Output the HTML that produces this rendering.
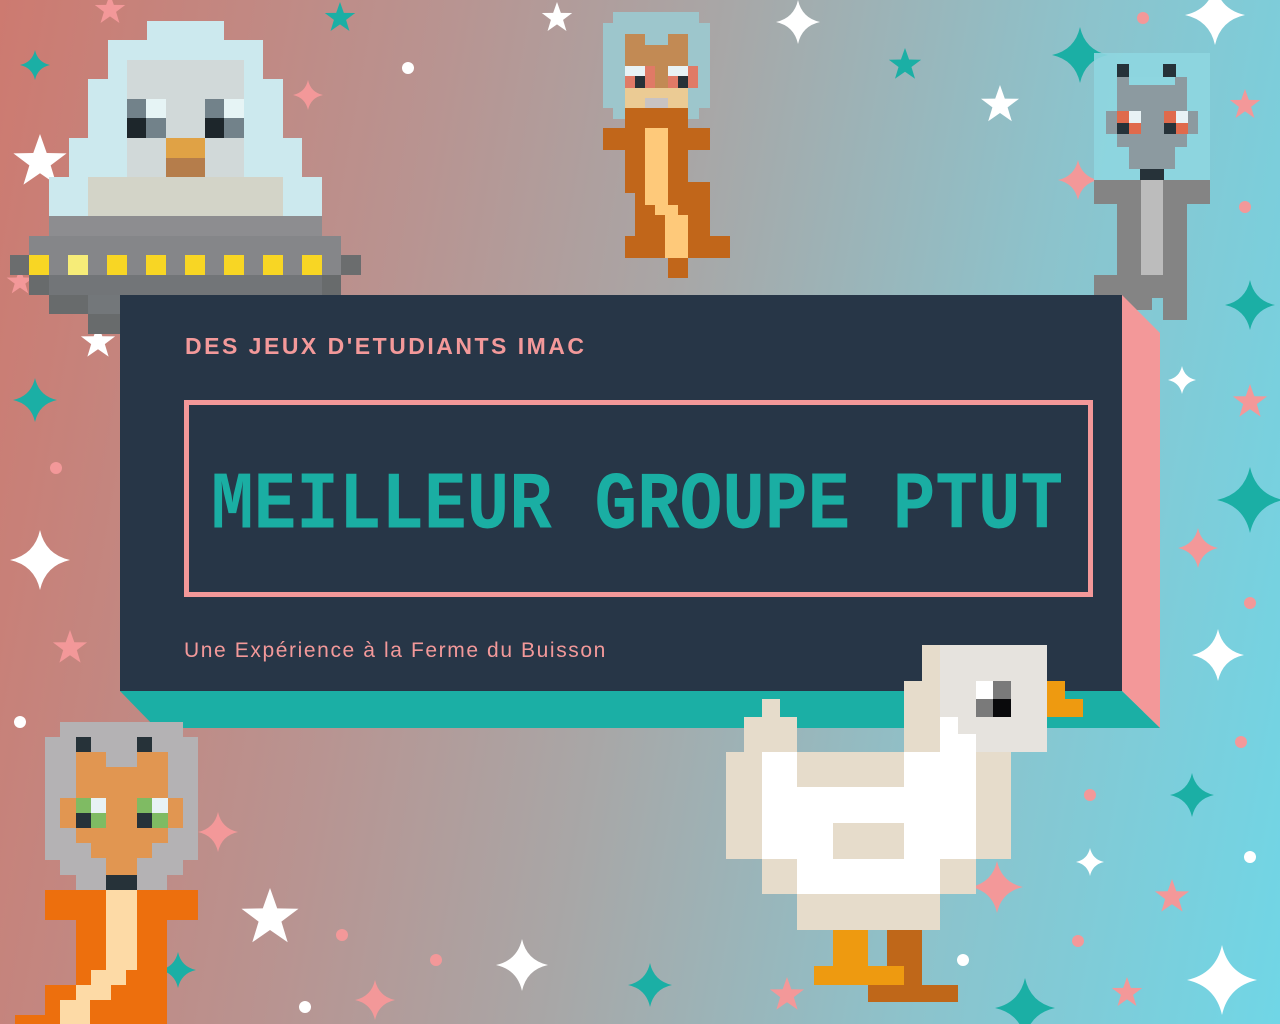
<!DOCTYPE html>
<html><head><meta charset="utf-8"><style>
html,body{margin:0;padding:0}
body{width:1280px;height:1024px;overflow:hidden;position:relative;background:linear-gradient(100deg,#cd7a70 0%,#b99390 30%,#a8a7a7 50%,#8cc3cc 75%,#70d6e6 100%);font-family:"Liberation Sans",sans-serif}
svg{position:absolute;left:0;top:0}
.t{position:absolute;color:#f3999a}
</style></head><body>
<svg width="1280" height="1024" viewBox="0 0 1280 1024">
<defs>
<path id="sp" d="M0,-1 Q0.18,-0.18 1,0 Q0.18,0.18 0,1 Q-0.18,0.18 -1,0 Q-0.18,-0.18 0,-1Z"/>
<path id="st" d="M0,-1 L0.24,-0.32 0.95,-0.31 0.38,0.12 0.59,0.81 0,0.4 -0.59,0.81 -0.38,0.12 -0.95,-0.31 -0.24,-0.32Z"/>
</defs>
<g>
<use href="#sp" transform="translate(35,65) scale(15)" fill="#1bafa5"/>
<use href="#sp" transform="translate(308,95) scale(15)" fill="#f39899"/>
<use href="#sp" transform="translate(798,22) scale(22)" fill="#fff"/>
<use href="#sp" transform="translate(1080,55) scale(28)" fill="#1bafa5"/>
<use href="#sp" transform="translate(1215,15) scale(30)" fill="#fff"/>
<use href="#sp" transform="translate(1182,380) scale(14)" fill="#fff"/>
<use href="#sp" transform="translate(1250,305) scale(25)" fill="#1bafa5"/>
<use href="#sp" transform="translate(1250,500) scale(33)" fill="#1bafa5"/>
<use href="#sp" transform="translate(1198,548) scale(20)" fill="#f39899"/>
<use href="#sp" transform="translate(40,560) scale(30)" fill="#fff"/>
<use href="#sp" transform="translate(35,400) scale(22)" fill="#1bafa5"/>
<use href="#sp" transform="translate(1218,655) scale(26)" fill="#fff"/>
<use href="#sp" transform="translate(1078,180) scale(20)" fill="#f39899"/>
<use href="#sp" transform="translate(1192,795) scale(22)" fill="#1bafa5"/>
<use href="#sp" transform="translate(1090,862) scale(14)" fill="#fff"/>
<use href="#sp" transform="translate(997,887) scale(26)" fill="#f39899"/>
<use href="#sp" transform="translate(1222,980) scale(35)" fill="#fff"/>
<use href="#sp" transform="translate(1025,1008) scale(30)" fill="#1bafa5"/>
<use href="#sp" transform="translate(650,985) scale(22)" fill="#1bafa5"/>
<use href="#sp" transform="translate(522,965) scale(26)" fill="#fff"/>
<use href="#sp" transform="translate(218,832) scale(20)" fill="#f39899"/>
<use href="#sp" transform="translate(178,970) scale(18)" fill="#1bafa5"/>
<use href="#sp" transform="translate(375,1000) scale(20)" fill="#f39899"/>
<use href="#st" transform="translate(40,162) scale(28)" fill="#fff"/>
<use href="#st" transform="translate(98,342) scale(18)" fill="#fff"/>
<use href="#st" transform="translate(340,18) scale(16)" fill="#1bafa5"/>
<use href="#st" transform="translate(557,18) scale(16)" fill="#fff"/>
<use href="#st" transform="translate(905,65) scale(17)" fill="#1bafa5"/>
<use href="#st" transform="translate(1000,105) scale(20)" fill="#fff"/>
<use href="#st" transform="translate(1245,105) scale(16)" fill="#f39899"/>
<use href="#st" transform="translate(1250,402) scale(18)" fill="#f39899"/>
<use href="#st" transform="translate(70,648) scale(18)" fill="#f39899"/>
<use href="#st" transform="translate(270,918) scale(30)" fill="#fff"/>
<use href="#st" transform="translate(787,995) scale(18)" fill="#f39899"/>
<use href="#st" transform="translate(1172,897) scale(18)" fill="#f39899"/>
<use href="#st" transform="translate(1127,993) scale(16)" fill="#f39899"/>
<use href="#st" transform="translate(110,10) scale(16)" fill="#f39899"/>
<use href="#st" transform="translate(20,282) scale(14)" fill="#f39899"/>
<g fill="#fff"><circle cx="408" cy="68" r="6"/><circle cx="20" cy="722" r="6"/><circle cx="1250" cy="857" r="6"/><circle cx="963" cy="960" r="6"/><circle cx="305" cy="1007" r="6"/></g>
<g fill="#f39899"><circle cx="1143" cy="18" r="6"/><circle cx="1245" cy="207" r="6"/><circle cx="56" cy="468" r="6"/><circle cx="1250" cy="603" r="6"/><circle cx="1241" cy="742" r="6"/><circle cx="1090" cy="795" r="6"/><circle cx="1078" cy="941" r="6"/><circle cx="342" cy="935" r="6"/><circle cx="436" cy="960" r="6"/></g>
</g>

<!-- UFO -->
<g>
<rect x="147" y="21" width="77" height="20" fill="#cce9ee"/>
<rect x="108" y="40" width="155" height="40" fill="#cce9ee"/>
<rect x="88" y="79" width="195" height="60" fill="#cce9ee"/>
<rect x="69" y="138" width="233" height="40" fill="#cce9ee"/>
<rect x="49" y="177" width="273" height="40" fill="#cce9ee"/>
<rect x="127" y="60" width="117" height="117" fill="#d1d9d9"/>
<rect x="127" y="99" width="20" height="20" fill="#72828a"/><rect x="146" y="99" width="20" height="20" fill="#e6f4f5"/>
<rect x="127" y="118" width="20" height="20" fill="#1d262b"/><rect x="146" y="118" width="20" height="20" fill="#72828a"/>
<rect x="205" y="99" width="20" height="20" fill="#72828a"/><rect x="224" y="99" width="20" height="20" fill="#e6f4f5"/>
<rect x="205" y="118" width="20" height="20" fill="#1d262b"/><rect x="224" y="118" width="20" height="20" fill="#72828a"/>
<rect x="166" y="138" width="39" height="20" fill="#e0a245"/><rect x="166" y="158" width="39" height="19" fill="#b57d4b"/>
<rect x="88" y="177" width="195" height="39" fill="#d3d4c8"/>
<rect x="49" y="216" width="273" height="20" fill="#8d8d90"/>
<rect x="29" y="236" width="312" height="20" fill="#858689"/>
<rect x="10" y="255" width="19" height="20" fill="#6b6d6e"/><rect x="29" y="255" width="312" height="20" fill="#858689"/><rect x="341" y="255" width="20" height="20" fill="#6b6d6e"/>
<g fill="#f8d624"><rect x="29" y="255" width="20" height="20"/><rect x="107" y="255" width="20" height="20"/><rect x="146" y="255" width="20" height="20"/><rect x="185" y="255" width="20" height="20"/><rect x="224" y="255" width="20" height="20"/><rect x="263" y="255" width="20" height="20"/><rect x="302" y="255" width="20" height="20"/></g>
<rect x="68" y="255" width="20" height="20" fill="#f6ec78"/>
<rect x="29" y="275" width="312" height="20" fill="#727578"/><rect x="29" y="275" width="20" height="20" fill="#686b6c"/><rect x="322" y="275" width="19" height="20" fill="#686b6c"/>
<rect x="49" y="295" width="40" height="19" fill="#686b6c"/><rect x="88" y="295" width="40" height="19" fill="#73777a"/>
<rect x="88" y="314" width="40" height="20" fill="#686b6c"/>
</g>

<!-- squirrel -->
<g>
<rect x="613" y="12" width="86" height="12" fill="#9dc6cc"/>
<rect x="603" y="23" width="107" height="85" fill="#9dc6cc"/>
<rect x="613" y="107" width="86" height="12" fill="#9dc6cc"/>
<rect x="625" y="34" width="63" height="54" fill="#c28a54"/><rect x="645" y="34" width="23" height="11" fill="#9dc6cc"/>
<rect x="625" y="66" width="20" height="10" fill="#e8f2f5"/><rect x="645" y="66" width="10" height="22" fill="#e07a66"/><rect x="625" y="76" width="10" height="12" fill="#e07a66"/><rect x="635" y="76" width="10" height="12" fill="#273238"/>
<rect x="668" y="66" width="20" height="10" fill="#e8f2f5"/><rect x="688" y="66" width="10" height="22" fill="#e07a66"/><rect x="668" y="76" width="10" height="12" fill="#e07a66"/><rect x="678" y="76" width="10" height="12" fill="#273238"/>
<rect x="625" y="88" width="63" height="20" fill="#ebcb94"/><rect x="645" y="98" width="23" height="10" fill="#c8c3c3"/>
<rect x="625" y="108" width="63" height="85" fill="#c1661a"/><rect x="603" y="128" width="107" height="22" fill="#c1661a"/>
<rect x="635" y="193" width="63" height="43" fill="#c1661a"/><rect x="688" y="182" width="22" height="54" fill="#c1661a"/>
<rect x="625" y="236" width="105" height="22" fill="#c1661a"/><rect x="668" y="258" width="20" height="20" fill="#c1661a"/>
<rect x="645" y="128" width="23" height="77" fill="#fec97a"/><rect x="655" y="205" width="23" height="10" fill="#fec97a"/><rect x="665" y="215" width="23" height="43" fill="#fec97a"/>
</g>

<!-- alien -->
<g>
<rect x="1094" y="53" width="116" height="127" fill="#8ed6e0" opacity="0.9"/>
<rect x="1117" y="64" width="12" height="13" fill="#263239"/><rect x="1163" y="64" width="13" height="13" fill="#263239"/>
<rect x="1117" y="77" width="70" height="70" fill="#8c9aa0"/><rect x="1106" y="111" width="92" height="23" fill="#8c9aa0"/>
<rect x="1129" y="77" width="46" height="8" fill="#8ed6e0"/>
<rect x="1117" y="111" width="12" height="12" fill="#e06a4c"/><rect x="1129" y="111" width="12" height="12" fill="#e8f2f5"/><rect x="1117" y="123" width="12" height="11" fill="#263239"/><rect x="1129" y="123" width="12" height="11" fill="#e06a4c"/>
<rect x="1164" y="111" width="12" height="12" fill="#e06a4c"/><rect x="1176" y="111" width="12" height="12" fill="#e8f2f5"/><rect x="1164" y="123" width="12" height="11" fill="#263239"/><rect x="1176" y="123" width="12" height="11" fill="#e06a4c"/>
<rect x="1129" y="147" width="46" height="22" fill="#8c9aa0"/>
<rect x="1140" y="169" width="24" height="11" fill="#263239"/>
<rect x="1094" y="180" width="116" height="24" fill="#848484"/><rect x="1117" y="204" width="70" height="71" fill="#848484"/>
<rect x="1141" y="180" width="22" height="95" fill="#bcbcbc"/>
<rect x="1094" y="275" width="93" height="23" fill="#848484"/><rect x="1117" y="298" width="35" height="12" fill="#848484"/><rect x="1163" y="298" width="24" height="22" fill="#848484"/>
</g>

<!-- panel -->
<polygon points="1122,295 1160,333 1160,728 1122,691" fill="#f39899"/>
<polygon points="120,691 1122,691 1160,728 156,728" fill="#1bafa5"/>
<rect x="120" y="295" width="1002" height="396" fill="#273647"/>
<rect x="186.5" y="402.5" width="904" height="192" fill="none" stroke="#f39899" stroke-width="5"/>

<!-- cat -->
<g>
<rect x="60" y="722" width="123" height="15" fill="#b4b2b4"/>
<rect x="45" y="737" width="153" height="123" fill="#b4b2b4"/>
<rect x="60" y="860" width="123" height="15" fill="#b4b2b4"/>
<rect x="76" y="875" width="91" height="15" fill="#b4b2b4"/>
<rect x="76" y="737" width="15" height="15" fill="#263239"/><rect x="137" y="737" width="15" height="15" fill="#263239"/>
<rect x="76" y="752" width="30" height="91" fill="#e19651"/><rect x="106" y="767" width="31" height="76" fill="#e19651"/><rect x="137" y="752" width="31" height="91" fill="#e19651"/>
<rect x="60" y="798" width="123" height="30" fill="#e19651"/>
<rect x="91" y="843" width="61" height="15" fill="#e19651"/><rect x="106" y="858" width="31" height="17" fill="#e19651"/>
<rect x="76" y="798" width="15" height="15" fill="#7fbb63"/><rect x="91" y="798" width="15" height="15" fill="#e8f2f5"/><rect x="76" y="813" width="15" height="15" fill="#263239"/><rect x="91" y="813" width="15" height="15" fill="#7fbb63"/>
<rect x="137" y="798" width="15" height="15" fill="#7fbb63"/><rect x="152" y="798" width="16" height="15" fill="#e8f2f5"/><rect x="137" y="813" width="15" height="15" fill="#263239"/><rect x="152" y="813" width="16" height="15" fill="#7fbb63"/>
<rect x="106" y="875" width="31" height="15" fill="#263239"/>
<rect x="45" y="890" width="153" height="30" fill="#ed6f0d"/><rect x="76" y="920" width="91" height="65" fill="#ed6f0d"/>
<rect x="45" y="985" width="122" height="39" fill="#ed6f0d"/><rect x="15" y="1015" width="40" height="9" fill="#ed6f0d"/>
<rect x="106" y="890" width="31" height="80" fill="#fddaa6"/><rect x="91" y="970" width="35" height="15" fill="#fddaa6"/><rect x="76" y="985" width="35" height="15" fill="#fddaa6"/><rect x="60" y="1000" width="30" height="24" fill="#fddaa6"/>
</g>

<!-- duck -->
<g>
<rect x="922" y="645" width="18" height="36" fill="#e6dccb"/><rect x="904" y="681" width="36" height="71" fill="#e6dccb"/>
<rect x="940" y="645" width="107" height="107" fill="#e6e3de"/>
<rect x="976" y="681" width="17" height="18" fill="#fff"/><rect x="993" y="681" width="18" height="18" fill="#7a7a7a"/><rect x="976" y="699" width="17" height="18" fill="#7a7a7a"/><rect x="993" y="699" width="18" height="18" fill="#0a0a0c"/>
<rect x="1047" y="681" width="18" height="36" fill="#ee9a10"/><rect x="1065" y="699" width="18" height="18" fill="#ee9a10"/>
<rect x="940" y="717" width="18" height="35" fill="#fff"/><rect x="940" y="734" width="36" height="18" fill="#fff"/>
<rect x="762" y="699" width="18" height="18" fill="#e6dccb"/><rect x="744" y="717" width="53" height="35" fill="#e6dccb"/>
<rect x="726" y="752" width="285" height="107" fill="#e6dccb"/>
<rect x="762" y="752" width="214" height="107" fill="#fff"/>
<rect x="797" y="752" width="107" height="35" fill="#e6dccb"/><rect x="833" y="823" width="71" height="36" fill="#e6dccb"/>
<rect x="762" y="859" width="214" height="35" fill="#e6dccb"/><rect x="797" y="859" width="143" height="35" fill="#fff"/>
<rect x="797" y="894" width="143" height="36" fill="#e6dccb"/>
<rect x="887" y="930" width="35" height="72" fill="#bf6719"/><rect x="868" y="985" width="90" height="17" fill="#bf6719"/>
<rect x="833" y="930" width="35" height="36" fill="#ee9a10"/><rect x="814" y="966" width="90" height="19" fill="#ee9a10"/>
</g>
</svg>
<div class="t" style="left:185px;top:333px;font-size:23px;font-weight:bold;letter-spacing:2.5px;">DES JEUX D'ETUDIANTS IMAC</div>
<div class="t" style="left:211px;top:461px;font-family:'Liberation Mono',monospace;font-size:71px;font-weight:bold;color:#1aaea3;transform:scaleY(1.15);transform-origin:0 50%;line-height:92px;white-space:nowrap;">MEILLEUR GROUPE PTUT</div>
<div class="t" style="left:184px;top:639px;font-size:21px;letter-spacing:1.6px;">Une Expérience à la Ferme du Buisson</div>
</body></html>
